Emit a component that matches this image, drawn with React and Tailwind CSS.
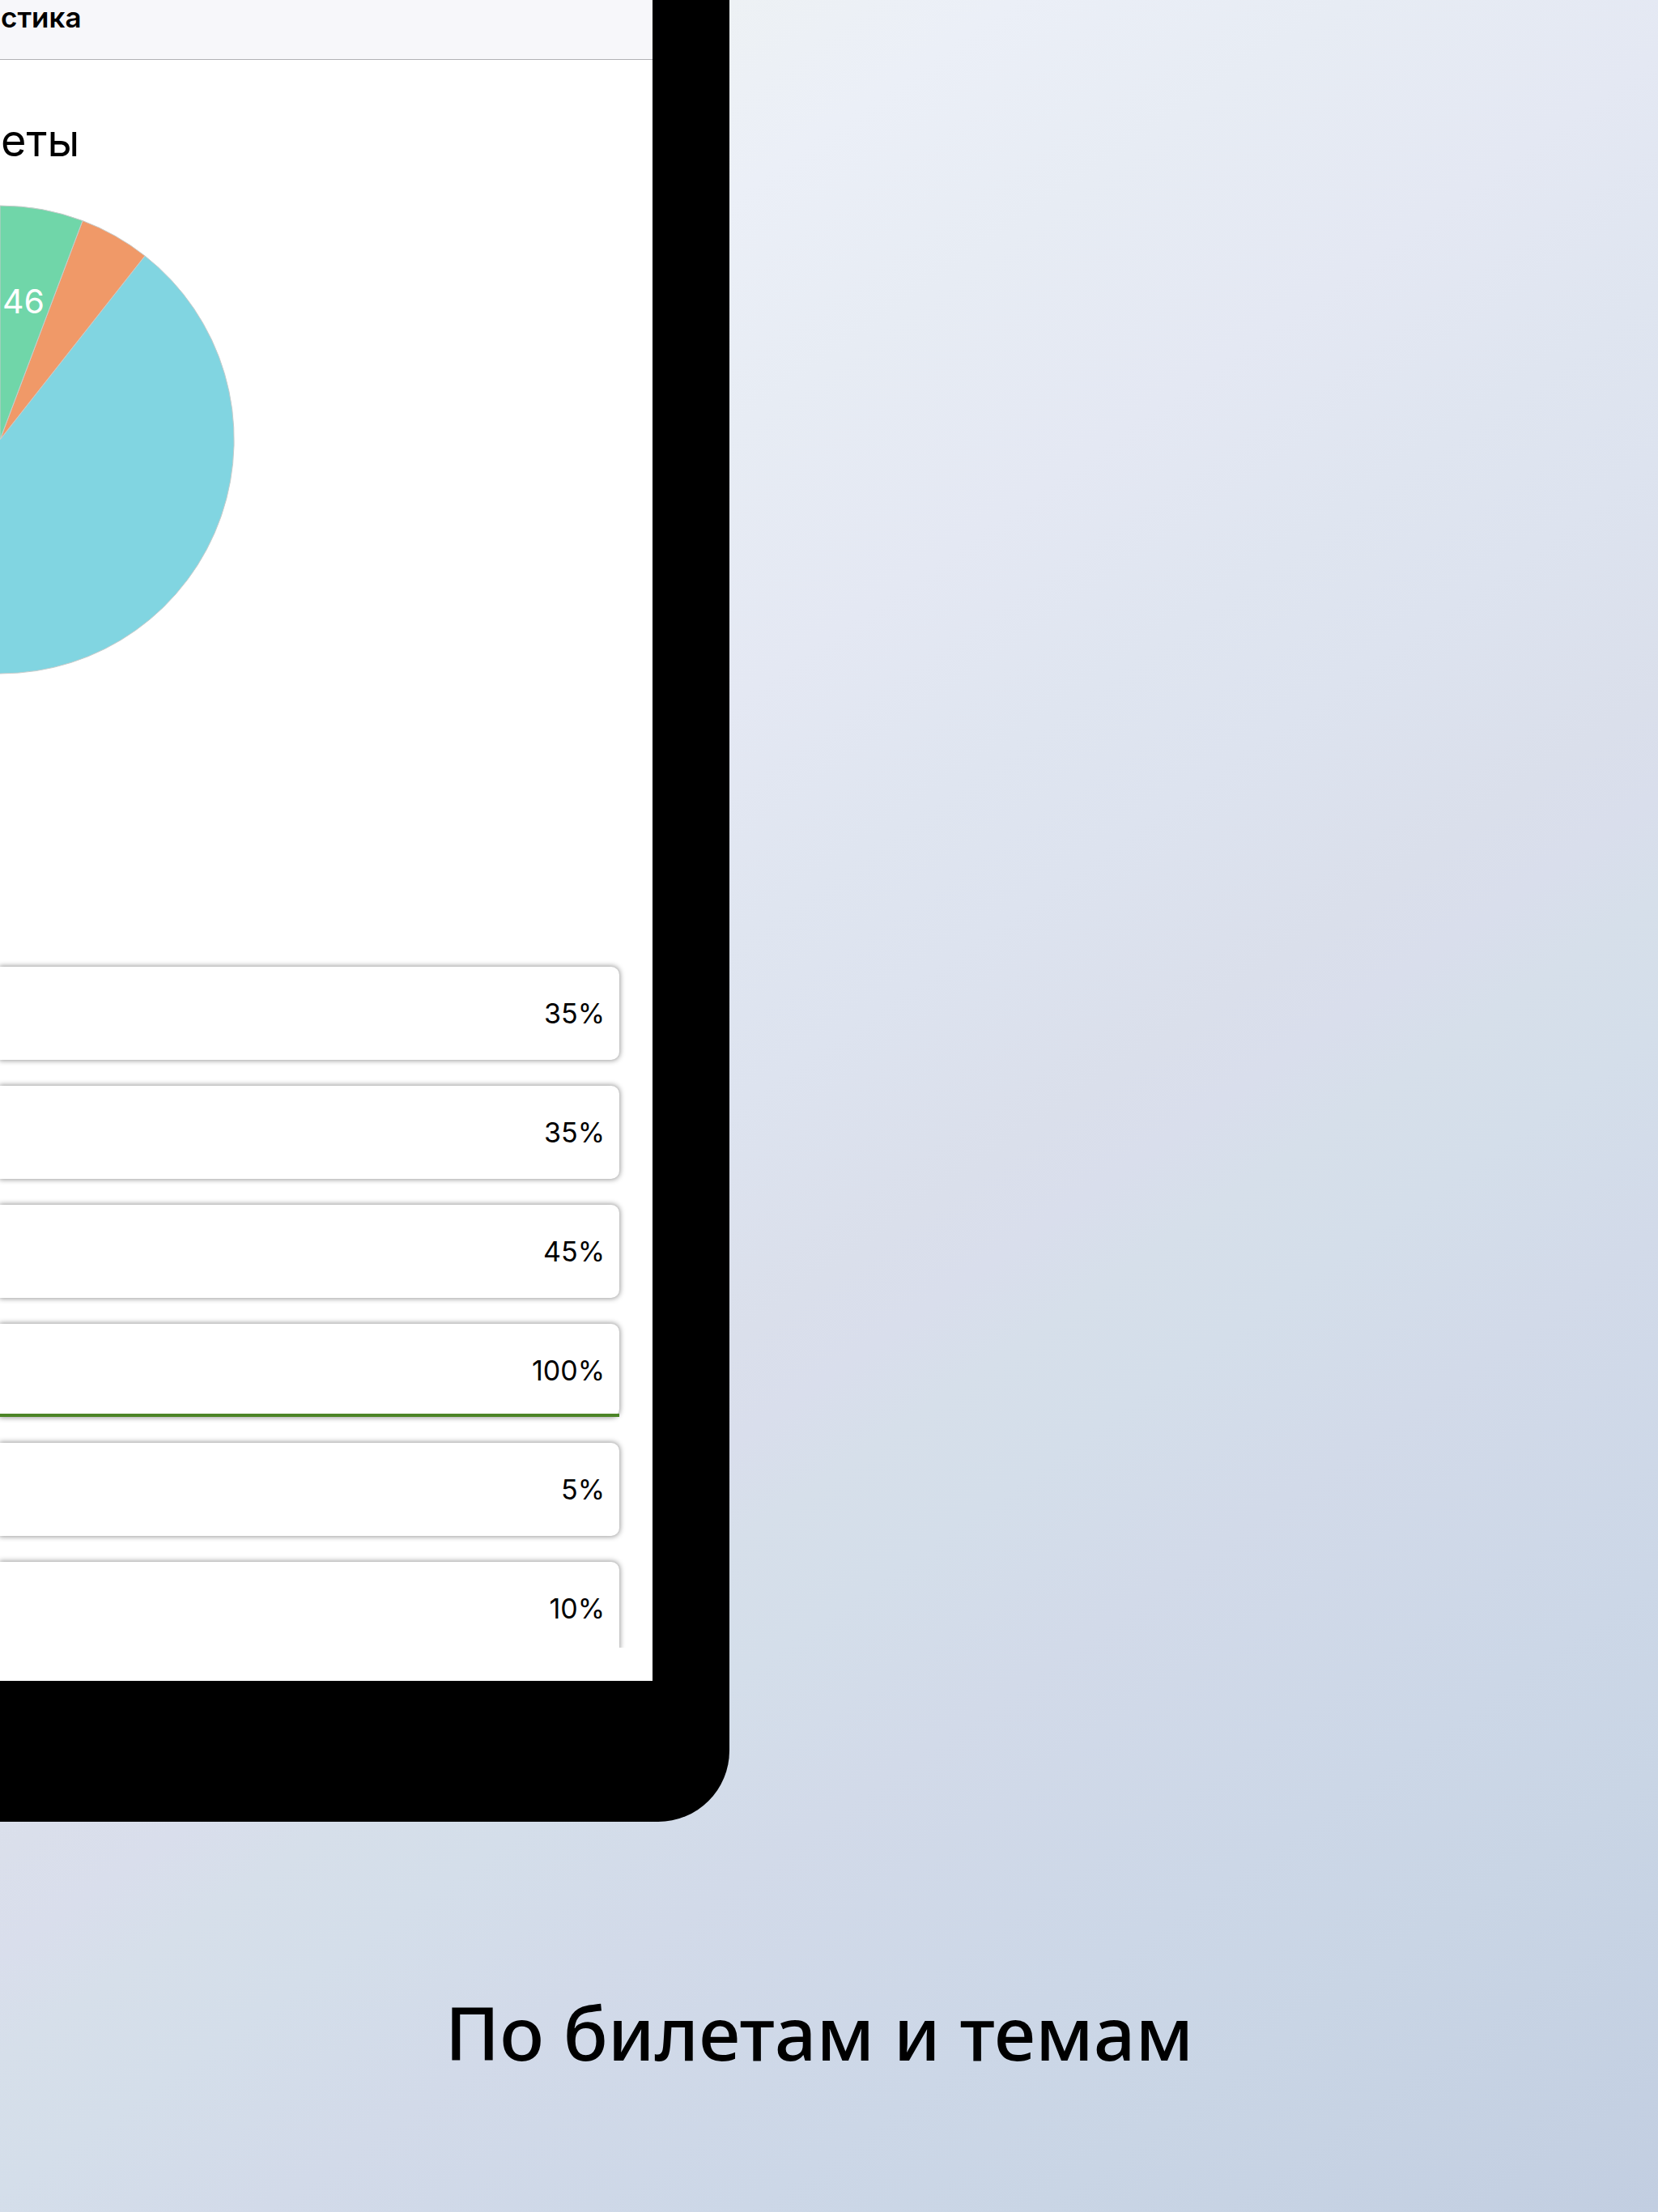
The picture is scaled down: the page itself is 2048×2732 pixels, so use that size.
const tickets = [
  { id: 1, percent: 35 },
  { id: 2, percent: 35 },
  { id: 3, percent: 45 },
  { id: 4, percent: 100 },
  { id: 5, percent: 5 },
  { id: 6, percent: 10 },
];

function PieChart() {
  return (
    <svg
      viewBox="0 0 290 580"
      className="block w-[290px] h-[580px]"
      stroke="#c8cccb"
      strokeWidth="1"
      role="img"
      aria-label="Билеты"
    >
      <path d="M0 290 L179 63 A289 289 0 0 1 0 579" fill="#81d5e1" />
      <path d="M0 290 L102 19.6 A289 289 0 0 1 179 63 Z" fill="#f09968" />
      <path d="M0 290 L0 1 A289 289 0 0 1 102 19.6 Z" fill="#70d6a9" />
      <text x="3" y="134" fontSize="41" fontWeight="400" fill="#ffffff" stroke="none">
        46
      </text>
    </svg>
  );
}

function TicketRow({ percent }) {
  const done = percent === 100;

  return (
    <li className="relative h-[115px] shrink-0 flex items-center justify-end pr-[18px] bg-white rounded-r-[10px] shadow-[0_0_6px_1px_rgba(0,0,0,0.4)]">
      <span className="text-[34px] leading-[44px]">{percent}%</span>
      {done && <span className="absolute inset-x-0 bottom-0 h-1 bg-[#4c8527]" />}
    </li>
  );
}

export default function App() {
  return (
    <div className="min-h-screen flex flex-col text-black font-['Inter',sans-serif] bg-[linear-gradient(145deg,#f1f2f2_0%,#edf1f4_15%,#ebeff7_21%,#e7ecf4_28%,#e4e8f3_36%,#dfe5f0_43%,#dde3ef_48%,#dadfeb_55%,#d9deec_58%,#d6dfea_61%,#d4deea_65%,#d2dae9_71%,#ccd7e7_81%,#c9d5e5_87%,#c2cee1_100%)]">
      <div className="w-[44%] pr-[95px] pb-[174px] bg-black rounded-br-[88px]">
        <main className="bg-white pb-[41px]">
          <header className="h-[74px] pl-px bg-[#f7f7fa] border-b border-[#b2b2b5]">
            <p className="text-[35px] leading-[42px] font-semibold">стика</p>
          </header>

          <h1 className="pt-[70px] pl-px text-[54px] leading-[60px]">еты</h1>

          <div className="pt-[49px]">
            <PieChart />
          </div>

          {/* Lista de billetes */}
          <ul className="mt-[351px] h-[851px] pt-[10px] pr-[41px] flex flex-col gap-8 overflow-hidden">
            {tickets.map((ticket) => (
              <TicketRow key={ticket.id} percent={ticket.percent} />
            ))}
          </ul>
        </main>
      </div>

      <p className="mt-[196px] pr-6 text-center font-['Noto_Sans',sans-serif] font-medium text-[91px] leading-[128px]">
        По билетам и темам
      </p>
    </div>
  );
}
